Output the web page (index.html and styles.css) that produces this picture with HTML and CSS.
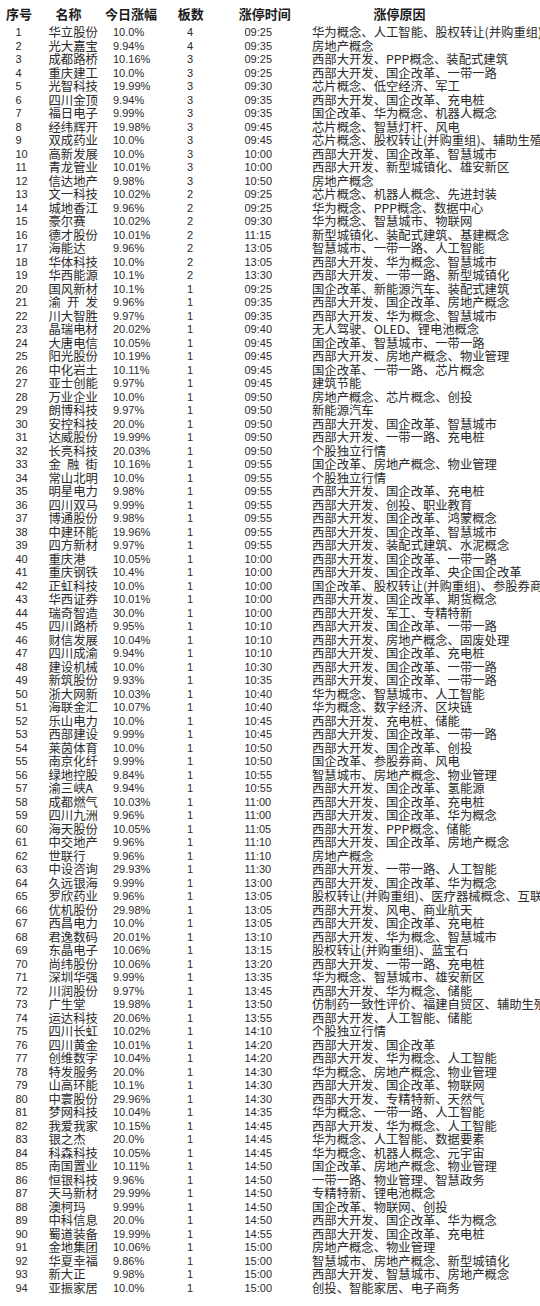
FILE: index.html
```html
<!DOCTYPE html>
<html lang="zh-CN">
<head>
<meta charset="utf-8">
<title>涨停列表</title>
<link rel="stylesheet" href="styles.css">
</head>
<body>
<div class="table">
  <div class="head">
    <span>序号</span><span>名称</span><span>今日涨幅</span><span>板数</span><span>涨停时间</span><span>涨停原因</span>
  </div>
  <div class="row"><span class="no">1</span><span class="name">华立股份</span><span class="pct">10.0%</span><span class="board">4</span><span class="time">09:25</span><span class="reason">华为概念、人工智能、股权转让(并购重组)、小金属概念</span></div>
  <div class="row"><span class="no">2</span><span class="name">光大嘉宝</span><span class="pct">9.94%</span><span class="board">4</span><span class="time">09:35</span><span class="reason">房地产概念</span></div>
  <div class="row"><span class="no">3</span><span class="name">成都路桥</span><span class="pct">10.16%</span><span class="board">3</span><span class="time">09:25</span><span class="reason">西部大开发、PPP概念、装配式建筑</span></div>
  <div class="row"><span class="no">4</span><span class="name">重庆建工</span><span class="pct">10.0%</span><span class="board">3</span><span class="time">09:25</span><span class="reason">西部大开发、国企改革、一带一路</span></div>
  <div class="row"><span class="no">5</span><span class="name">光智科技</span><span class="pct">19.99%</span><span class="board">3</span><span class="time">09:30</span><span class="reason">芯片概念、低空经济、军工</span></div>
  <div class="row"><span class="no">6</span><span class="name">四川金顶</span><span class="pct">9.94%</span><span class="board">3</span><span class="time">09:35</span><span class="reason">西部大开发、国企改革、充电桩</span></div>
  <div class="row"><span class="no">7</span><span class="name">福日电子</span><span class="pct">9.99%</span><span class="board">3</span><span class="time">09:35</span><span class="reason">国企改革、华为概念、机器人概念</span></div>
  <div class="row"><span class="no">8</span><span class="name">经纬辉开</span><span class="pct">19.98%</span><span class="board">3</span><span class="time">09:45</span><span class="reason">芯片概念、智慧灯杆、风电</span></div>
  <div class="row"><span class="no">9</span><span class="name">双成药业</span><span class="pct">10.0%</span><span class="board">3</span><span class="time">09:45</span><span class="reason">芯片概念、股权转让(并购重组)、辅助生殖</span></div>
  <div class="row"><span class="no">10</span><span class="name">高新发展</span><span class="pct">10.0%</span><span class="board">3</span><span class="time">10:00</span><span class="reason">西部大开发、国企改革、智慧城市</span></div>
  <div class="row"><span class="no">11</span><span class="name">青龙管业</span><span class="pct">10.01%</span><span class="board">3</span><span class="time">10:00</span><span class="reason">西部大开发、新型城镇化、雄安新区</span></div>
  <div class="row"><span class="no">12</span><span class="name">信达地产</span><span class="pct">9.98%</span><span class="board">3</span><span class="time">10:50</span><span class="reason">房地产概念</span></div>
  <div class="row"><span class="no">13</span><span class="name">文一科技</span><span class="pct">10.02%</span><span class="board">2</span><span class="time">09:25</span><span class="reason">芯片概念、机器人概念、先进封装</span></div>
  <div class="row"><span class="no">14</span><span class="name">城地香江</span><span class="pct">9.96%</span><span class="board">2</span><span class="time">09:25</span><span class="reason">华为概念、PPP概念、数据中心</span></div>
  <div class="row"><span class="no">15</span><span class="name">豪尔赛</span><span class="pct">10.02%</span><span class="board">2</span><span class="time">09:30</span><span class="reason">华为概念、智慧城市、物联网</span></div>
  <div class="row"><span class="no">16</span><span class="name">德才股份</span><span class="pct">10.01%</span><span class="board">2</span><span class="time">11:15</span><span class="reason">新型城镇化、装配式建筑、基建概念</span></div>
  <div class="row"><span class="no">17</span><span class="name">海能达</span><span class="pct">9.96%</span><span class="board">2</span><span class="time">13:05</span><span class="reason">智慧城市、一带一路、人工智能</span></div>
  <div class="row"><span class="no">18</span><span class="name">华体科技</span><span class="pct">10.0%</span><span class="board">2</span><span class="time">13:05</span><span class="reason">西部大开发、华为概念、智慧城市</span></div>
  <div class="row"><span class="no">19</span><span class="name">华西能源</span><span class="pct">10.1%</span><span class="board">2</span><span class="time">13:30</span><span class="reason">西部大开发、一带一路、新型城镇化</span></div>
  <div class="row"><span class="no">20</span><span class="name">国风新材</span><span class="pct">10.1%</span><span class="board">1</span><span class="time">09:25</span><span class="reason">国企改革、新能源汽车、装配式建筑</span></div>
  <div class="row"><span class="no">21</span><span class="name">渝&ensp;开&ensp;发</span><span class="pct">9.96%</span><span class="board">1</span><span class="time">09:35</span><span class="reason">西部大开发、国企改革、房地产概念</span></div>
  <div class="row"><span class="no">22</span><span class="name">川大智胜</span><span class="pct">9.97%</span><span class="board">1</span><span class="time">09:35</span><span class="reason">西部大开发、华为概念、智慧城市</span></div>
  <div class="row"><span class="no">23</span><span class="name">晶瑞电材</span><span class="pct">20.02%</span><span class="board">1</span><span class="time">09:40</span><span class="reason">无人驾驶、OLED、锂电池概念</span></div>
  <div class="row"><span class="no">24</span><span class="name">大唐电信</span><span class="pct">10.05%</span><span class="board">1</span><span class="time">09:45</span><span class="reason">国企改革、智慧城市、一带一路</span></div>
  <div class="row"><span class="no">25</span><span class="name">阳光股份</span><span class="pct">10.19%</span><span class="board">1</span><span class="time">09:45</span><span class="reason">西部大开发、房地产概念、物业管理</span></div>
  <div class="row"><span class="no">26</span><span class="name">中化岩土</span><span class="pct">10.11%</span><span class="board">1</span><span class="time">09:45</span><span class="reason">国企改革、一带一路、芯片概念</span></div>
  <div class="row"><span class="no">27</span><span class="name">亚士创能</span><span class="pct">9.97%</span><span class="board">1</span><span class="time">09:45</span><span class="reason">建筑节能</span></div>
  <div class="row"><span class="no">28</span><span class="name">万业企业</span><span class="pct">10.0%</span><span class="board">1</span><span class="time">09:50</span><span class="reason">房地产概念、芯片概念、创投</span></div>
  <div class="row"><span class="no">29</span><span class="name">朗博科技</span><span class="pct">9.97%</span><span class="board">1</span><span class="time">09:50</span><span class="reason">新能源汽车</span></div>
  <div class="row"><span class="no">30</span><span class="name">安控科技</span><span class="pct">20.0%</span><span class="board">1</span><span class="time">09:50</span><span class="reason">西部大开发、国企改革、智慧城市</span></div>
  <div class="row"><span class="no">31</span><span class="name">达威股份</span><span class="pct">19.99%</span><span class="board">1</span><span class="time">09:50</span><span class="reason">西部大开发、一带一路、充电桩</span></div>
  <div class="row"><span class="no">32</span><span class="name">长亮科技</span><span class="pct">20.03%</span><span class="board">1</span><span class="time">09:50</span><span class="reason">个股独立行情</span></div>
  <div class="row"><span class="no">33</span><span class="name">金&ensp;融&ensp;街</span><span class="pct">10.16%</span><span class="board">1</span><span class="time">09:55</span><span class="reason">国企改革、房地产概念、物业管理</span></div>
  <div class="row"><span class="no">34</span><span class="name">常山北明</span><span class="pct">10.0%</span><span class="board">1</span><span class="time">09:55</span><span class="reason">个股独立行情</span></div>
  <div class="row"><span class="no">35</span><span class="name">明星电力</span><span class="pct">9.98%</span><span class="board">1</span><span class="time">09:55</span><span class="reason">西部大开发、国企改革、充电桩</span></div>
  <div class="row"><span class="no">36</span><span class="name">四川双马</span><span class="pct">9.99%</span><span class="board">1</span><span class="time">09:55</span><span class="reason">西部大开发、创投、职业教育</span></div>
  <div class="row"><span class="no">37</span><span class="name">博通股份</span><span class="pct">9.98%</span><span class="board">1</span><span class="time">09:55</span><span class="reason">西部大开发、国企改革、鸿蒙概念</span></div>
  <div class="row"><span class="no">38</span><span class="name">中建环能</span><span class="pct">19.96%</span><span class="board">1</span><span class="time">09:55</span><span class="reason">西部大开发、国企改革、智慧城市</span></div>
  <div class="row"><span class="no">39</span><span class="name">四方新材</span><span class="pct">9.97%</span><span class="board">1</span><span class="time">09:55</span><span class="reason">西部大开发、装配式建筑、水泥概念</span></div>
  <div class="row"><span class="no">40</span><span class="name">重庆港</span><span class="pct">10.05%</span><span class="board">1</span><span class="time">10:00</span><span class="reason">西部大开发、国企改革、一带一路</span></div>
  <div class="row"><span class="no">41</span><span class="name">重庆钢铁</span><span class="pct">10.4%</span><span class="board">1</span><span class="time">10:00</span><span class="reason">西部大开发、国企改革、央企国企改革</span></div>
  <div class="row"><span class="no">42</span><span class="name">正虹科技</span><span class="pct">10.0%</span><span class="board">1</span><span class="time">10:00</span><span class="reason">国企改革、股权转让(并购重组)、参股券商</span></div>
  <div class="row"><span class="no">43</span><span class="name">华西证券</span><span class="pct">10.01%</span><span class="board">1</span><span class="time">10:00</span><span class="reason">西部大开发、国企改革、期货概念</span></div>
  <div class="row"><span class="no">44</span><span class="name">瑞奇智造</span><span class="pct">30.0%</span><span class="board">1</span><span class="time">10:00</span><span class="reason">西部大开发、军工、专精特新</span></div>
  <div class="row"><span class="no">45</span><span class="name">四川路桥</span><span class="pct">9.95%</span><span class="board">1</span><span class="time">10:10</span><span class="reason">西部大开发、国企改革、一带一路</span></div>
  <div class="row"><span class="no">46</span><span class="name">财信发展</span><span class="pct">10.04%</span><span class="board">1</span><span class="time">10:10</span><span class="reason">西部大开发、房地产概念、固废处理</span></div>
  <div class="row"><span class="no">47</span><span class="name">四川成渝</span><span class="pct">9.94%</span><span class="board">1</span><span class="time">10:10</span><span class="reason">西部大开发、国企改革、充电桩</span></div>
  <div class="row"><span class="no">48</span><span class="name">建设机械</span><span class="pct">10.0%</span><span class="board">1</span><span class="time">10:30</span><span class="reason">西部大开发、国企改革、一带一路</span></div>
  <div class="row"><span class="no">49</span><span class="name">新筑股份</span><span class="pct">9.93%</span><span class="board">1</span><span class="time">10:35</span><span class="reason">西部大开发、国企改革、一带一路</span></div>
  <div class="row"><span class="no">50</span><span class="name">浙大网新</span><span class="pct">10.03%</span><span class="board">1</span><span class="time">10:40</span><span class="reason">华为概念、智慧城市、人工智能</span></div>
  <div class="row"><span class="no">51</span><span class="name">海联金汇</span><span class="pct">10.07%</span><span class="board">1</span><span class="time">10:40</span><span class="reason">华为概念、数字经济、区块链</span></div>
  <div class="row"><span class="no">52</span><span class="name">乐山电力</span><span class="pct">10.0%</span><span class="board">1</span><span class="time">10:45</span><span class="reason">西部大开发、充电桩、储能</span></div>
  <div class="row"><span class="no">53</span><span class="name">西部建设</span><span class="pct">9.99%</span><span class="board">1</span><span class="time">10:45</span><span class="reason">西部大开发、国企改革、一带一路</span></div>
  <div class="row"><span class="no">54</span><span class="name">莱茵体育</span><span class="pct">10.0%</span><span class="board">1</span><span class="time">10:50</span><span class="reason">西部大开发、国企改革、创投</span></div>
  <div class="row"><span class="no">55</span><span class="name">南京化纤</span><span class="pct">9.99%</span><span class="board">1</span><span class="time">10:50</span><span class="reason">国企改革、参股券商、风电</span></div>
  <div class="row"><span class="no">56</span><span class="name">绿地控股</span><span class="pct">9.84%</span><span class="board">1</span><span class="time">10:55</span><span class="reason">智慧城市、房地产概念、物业管理</span></div>
  <div class="row"><span class="no">57</span><span class="name">渝三峡A</span><span class="pct">9.94%</span><span class="board">1</span><span class="time">10:55</span><span class="reason">西部大开发、国企改革、氢能源</span></div>
  <div class="row"><span class="no">58</span><span class="name">成都燃气</span><span class="pct">10.03%</span><span class="board">1</span><span class="time">11:00</span><span class="reason">西部大开发、国企改革、充电桩</span></div>
  <div class="row"><span class="no">59</span><span class="name">四川九洲</span><span class="pct">9.96%</span><span class="board">1</span><span class="time">11:00</span><span class="reason">西部大开发、国企改革、华为概念</span></div>
  <div class="row"><span class="no">60</span><span class="name">海天股份</span><span class="pct">10.05%</span><span class="board">1</span><span class="time">11:05</span><span class="reason">西部大开发、PPP概念、储能</span></div>
  <div class="row"><span class="no">61</span><span class="name">中交地产</span><span class="pct">9.96%</span><span class="board">1</span><span class="time">11:10</span><span class="reason">西部大开发、国企改革、房地产概念</span></div>
  <div class="row"><span class="no">62</span><span class="name">世联行</span><span class="pct">9.96%</span><span class="board">1</span><span class="time">11:10</span><span class="reason">房地产概念</span></div>
  <div class="row"><span class="no">63</span><span class="name">中设咨询</span><span class="pct">29.93%</span><span class="board">1</span><span class="time">11:30</span><span class="reason">西部大开发、一带一路、人工智能</span></div>
  <div class="row"><span class="no">64</span><span class="name">久远银海</span><span class="pct">9.99%</span><span class="board">1</span><span class="time">13:00</span><span class="reason">西部大开发、国企改革、华为概念</span></div>
  <div class="row"><span class="no">65</span><span class="name">罗欣药业</span><span class="pct">9.96%</span><span class="board">1</span><span class="time">13:05</span><span class="reason">股权转让(并购重组)、医疗器械概念、互联网医疗</span></div>
  <div class="row"><span class="no">66</span><span class="name">优机股份</span><span class="pct">29.98%</span><span class="board">1</span><span class="time">13:05</span><span class="reason">西部大开发、风电、商业航天</span></div>
  <div class="row"><span class="no">67</span><span class="name">西昌电力</span><span class="pct">10.0%</span><span class="board">1</span><span class="time">13:05</span><span class="reason">西部大开发、国企改革、充电桩</span></div>
  <div class="row"><span class="no">68</span><span class="name">君逸数码</span><span class="pct">20.01%</span><span class="board">1</span><span class="time">13:10</span><span class="reason">西部大开发、华为概念、智慧城市</span></div>
  <div class="row"><span class="no">69</span><span class="name">东晶电子</span><span class="pct">10.06%</span><span class="board">1</span><span class="time">13:15</span><span class="reason">股权转让(并购重组)、蓝宝石</span></div>
  <div class="row"><span class="no">70</span><span class="name">尚纬股份</span><span class="pct">10.06%</span><span class="board">1</span><span class="time">13:20</span><span class="reason">西部大开发、一带一路、充电桩</span></div>
  <div class="row"><span class="no">71</span><span class="name">深圳华强</span><span class="pct">9.99%</span><span class="board">1</span><span class="time">13:35</span><span class="reason">华为概念、智慧城市、雄安新区</span></div>
  <div class="row"><span class="no">72</span><span class="name">川润股份</span><span class="pct">9.97%</span><span class="board">1</span><span class="time">13:45</span><span class="reason">西部大开发、华为概念、储能</span></div>
  <div class="row"><span class="no">73</span><span class="name">广生堂</span><span class="pct">19.98%</span><span class="board">1</span><span class="time">13:50</span><span class="reason">仿制药一致性评价、福建自贸区、辅助生殖</span></div>
  <div class="row"><span class="no">74</span><span class="name">运达科技</span><span class="pct">20.06%</span><span class="board">1</span><span class="time">13:55</span><span class="reason">西部大开发、人工智能、储能</span></div>
  <div class="row"><span class="no">75</span><span class="name">四川长虹</span><span class="pct">10.02%</span><span class="board">1</span><span class="time">14:10</span><span class="reason">个股独立行情</span></div>
  <div class="row"><span class="no">76</span><span class="name">四川黄金</span><span class="pct">10.01%</span><span class="board">1</span><span class="time">14:20</span><span class="reason">西部大开发、国企改革</span></div>
  <div class="row"><span class="no">77</span><span class="name">创维数字</span><span class="pct">10.04%</span><span class="board">1</span><span class="time">14:20</span><span class="reason">西部大开发、华为概念、人工智能</span></div>
  <div class="row"><span class="no">78</span><span class="name">特发服务</span><span class="pct">20.0%</span><span class="board">1</span><span class="time">14:30</span><span class="reason">华为概念、房地产概念、物业管理</span></div>
  <div class="row"><span class="no">79</span><span class="name">山高环能</span><span class="pct">10.1%</span><span class="board">1</span><span class="time">14:30</span><span class="reason">西部大开发、国企改革、物联网</span></div>
  <div class="row"><span class="no">80</span><span class="name">中寰股份</span><span class="pct">29.96%</span><span class="board">1</span><span class="time">14:30</span><span class="reason">西部大开发、专精特新、天然气</span></div>
  <div class="row"><span class="no">81</span><span class="name">梦网科技</span><span class="pct">10.04%</span><span class="board">1</span><span class="time">14:35</span><span class="reason">华为概念、一带一路、人工智能</span></div>
  <div class="row"><span class="no">82</span><span class="name">我爱我家</span><span class="pct">10.15%</span><span class="board">1</span><span class="time">14:45</span><span class="reason">西部大开发、华为概念、人工智能</span></div>
  <div class="row"><span class="no">83</span><span class="name">银之杰</span><span class="pct">20.0%</span><span class="board">1</span><span class="time">14:45</span><span class="reason">华为概念、人工智能、数据要素</span></div>
  <div class="row"><span class="no">84</span><span class="name">科森科技</span><span class="pct">10.05%</span><span class="board">1</span><span class="time">14:45</span><span class="reason">华为概念、机器人概念、元宇宙</span></div>
  <div class="row"><span class="no">85</span><span class="name">南国置业</span><span class="pct">10.11%</span><span class="board">1</span><span class="time">14:50</span><span class="reason">国企改革、房地产概念、物业管理</span></div>
  <div class="row"><span class="no">86</span><span class="name">恒银科技</span><span class="pct">9.96%</span><span class="board">1</span><span class="time">14:50</span><span class="reason">一带一路、物业管理、智慧政务</span></div>
  <div class="row"><span class="no">87</span><span class="name">天马新材</span><span class="pct">29.99%</span><span class="board">1</span><span class="time">14:50</span><span class="reason">专精特新、锂电池概念</span></div>
  <div class="row"><span class="no">88</span><span class="name">澳柯玛</span><span class="pct">9.99%</span><span class="board">1</span><span class="time">14:50</span><span class="reason">国企改革、物联网、创投</span></div>
  <div class="row"><span class="no">89</span><span class="name">中科信息</span><span class="pct">20.0%</span><span class="board">1</span><span class="time">14:50</span><span class="reason">西部大开发、国企改革、华为概念</span></div>
  <div class="row"><span class="no">90</span><span class="name">蜀道装备</span><span class="pct">19.99%</span><span class="board">1</span><span class="time">14:55</span><span class="reason">西部大开发、国企改革、充电桩</span></div>
  <div class="row"><span class="no">91</span><span class="name">金地集团</span><span class="pct">10.06%</span><span class="board">1</span><span class="time">15:00</span><span class="reason">房地产概念、物业管理</span></div>
  <div class="row"><span class="no">92</span><span class="name">华夏幸福</span><span class="pct">9.86%</span><span class="board">1</span><span class="time">15:00</span><span class="reason">智慧城市、房地产概念、新型城镇化</span></div>
  <div class="row"><span class="no">93</span><span class="name">新大正</span><span class="pct">9.98%</span><span class="board">1</span><span class="time">15:00</span><span class="reason">西部大开发、智慧城市、房地产概念</span></div>
  <div class="row"><span class="no">94</span><span class="name">亚振家居</span><span class="pct">10.0%</span><span class="board">1</span><span class="time">15:00</span><span class="reason">创投、智能家居、电子商务</span></div>
</div>
</body>
</html>
```
FILE: styles.css
```css
html, body {
  margin: 0;
  padding: 0;
  background: #ffffff;
}
body {
  width: 540px;
  overflow: hidden;
  color: #2a2a2a;
  font-family: "Noto Sans CJK SC", "Liberation Sans", sans-serif;
}
.table {
  display: flex;
  flex-direction: column;
}
.head {
  display: grid;
  grid-template-columns: 37.8px 61.2px 63.8px 56px 91.8px 177.8px 1fr;
  box-sizing: border-box;
  height: 26.25px;
  padding-top: 2px;
  line-height: 24.25px;
  font-size: 13px;
  font-weight: bold;
  color: #1a1a1a;
}
.head span {
  text-align: center;
  white-space: nowrap;
}
.row {
  display: grid;
  grid-template-columns: 48.5px 64.5px 47px 60px 92px 1fr;
  height: 13.5px;
  line-height: 13.5px;
  align-items: center;
  font-size: 12.33px;
}
.row span {
  white-space: nowrap;
}
.no, .pct, .board, .time {
  font-family: "Liberation Sans", sans-serif;
  font-size: 11px;
  color: #2a2a2a;
}
.no {
  padding-left: 15.5px;
}
.board {
  text-align: center;
}
.time {
  padding-left: 24.5px;
}
.name, .reason {
  font-family: "Noto Sans CJK SC", "Liberation Sans", sans-serif;
  font-size: 12.33px;
}
.reason {
  min-width: 0;
}
```
